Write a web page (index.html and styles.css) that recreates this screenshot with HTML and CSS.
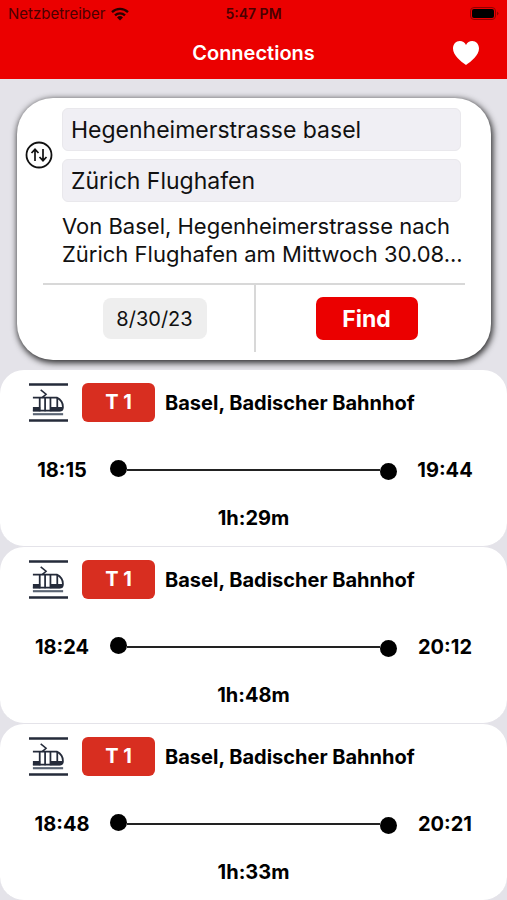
FILE: index.html
```
<!DOCTYPE html>
<html lang="de">
<head>
    <meta charset="utf-8">
    <meta name="viewport" content="width=device-width, initial-scale=1">
    <title>Connections</title>
    <link rel="stylesheet" href="styles.css">
</head>

<body>

    <!-- tram icon, used by every connection -->
    <svg class="sprite" aria-hidden="true">
        <symbol id="tram" viewBox="0 0 40 40">
            <path d="M0 1.500h40M0 38.500h40" stroke="#252b3a" stroke-width="2.400" fill="none"/>
            <path d="M4 32h31" stroke="#5a6473" stroke-width="2.200" fill="none"/>
            <path d="M4 15H28.500C32.500 17 34.800 20.500 34.800 24.500C34.800 27 34 28.300 31.500 28.300H4" stroke="#252b3a" stroke-width="1.800" fill="none"/>
            <path d="M4 24.500h7.500v4.500H4zM22 24.500h13c0 3-1 4.500-3.500 4.500H22z" fill="#252b3a"/>
            <path d="M11 15v14M16.500 15v14M22 15v14M29 15v9.500" stroke="#252b3a" stroke-width="1.800" fill="none"/>
            <path d="M12 7l5.500 4.500-4 3.500" stroke="#252b3a" stroke-width="1.600" fill="none"/>
        </symbol>
    </svg>

    <header class="top">
        <div class="status">
            <span class="carrier">Netzbetreiber
                <svg class="wifi" viewBox="0 0 18 14" aria-hidden="true">
                    <path d="M1 5.200a11.500 11.500 0 0 1 16 0M4 8.400a7.200 7.200 0 0 1 10 0" fill="none" stroke="#2a0000" stroke-width="2.300"/>
                    <path d="M9 13.500L6 10.500a4.300 4.300 0 0 1 6 0z" fill="#2a0000"/>
                </svg>
            </span>
            <span class="clock">5:47 PM</span>
            <svg class="battery" viewBox="0 0 29 13" aria-hidden="true">
                <rect x="0.500" y="0.500" width="25" height="12" rx="3.500" fill="none" stroke="#900000"/>
                <rect x="2" y="2" width="22" height="9" rx="2" fill="#000"/>
                <path d="M27 4.500q3 2 0 4z" fill="#900000"/>
            </svg>
        </div>
        <div class="nav">
            <h1 class="title">Connections</h1>
            <button class="favorite" type="button" aria-label="Favorites">
                <svg viewBox="0 0 26 24" aria-hidden="true">
                    <path d="M13 24C8 20.500 0 14.500 0 7.500C0 3 3 0 6.800 0C9.500 0 11.800 1.500 13 4C14.200 1.500 16.500 0 19.200 0C23 0 26 3 26 7.500C26 14.500 18 20.500 13 24z" fill="#fff"/>
                </svg>
            </button>
        </div>
    </header>

    <main>
        <form class="search">
            <div class="route">
                <button class="swap" type="button" aria-label="Swap stations">
                    <svg viewBox="0 0 28 28" fill="none" stroke="#111" aria-hidden="true">
                        <circle cx="14" cy="14" r="12.500" stroke-width="1.800"/>
                        <path d="M10 20V8.500M6.500 12L10 8.300l3.500 3.700M18 8v11.500M14.500 16l3.500 3.700 3.500-3.700" stroke-width="1.700"/>
                    </svg>
                </button>
                <div class="stations">
                    <input class="station" type="text" aria-label="From" value="Hegenheimerstrasse basel">
                    <input class="station" type="text" aria-label="To" value="Zürich Flughafen">
                </div>
            </div>
            <p class="summary">Von Basel, Hegenheimerstrasse nach Zürich Flughafen am Mittwoch 30.08...</p>
            <div class="actions">
                <div class="action">
                    <input class="date" type="text" aria-label="Date" value="8/30/23">
                </div>
                <div class="action">
                    <button class="find" type="button">Find</button>
                </div>
            </div>
        </form>

        <section class="connection">
            <div class="line">
                <svg class="tram" aria-hidden="true"><use href="#tram"/></svg>
                <span class="badge">T 1</span>
                <h2 class="direction">Basel, Badischer Bahnhof</h2>
            </div>
            <div class="times">
                <time>18:15</time>
                <div class="track"><i class="dot start"></i><i class="rail"></i><i class="dot end"></i></div>
                <time>19:44</time>
            </div>
            <p class="duration">1h:29m</p>
        </section>

        <section class="connection">
            <div class="line">
                <svg class="tram" aria-hidden="true"><use href="#tram"/></svg>
                <span class="badge">T 1</span>
                <h2 class="direction">Basel, Badischer Bahnhof</h2>
            </div>
            <div class="times">
                <time>18:24</time>
                <div class="track"><i class="dot start"></i><i class="rail"></i><i class="dot end"></i></div>
                <time>20:12</time>
            </div>
            <p class="duration">1h:48m</p>
        </section>

        <section class="connection">
            <div class="line">
                <svg class="tram" aria-hidden="true"><use href="#tram"/></svg>
                <span class="badge">T 1</span>
                <h2 class="direction">Basel, Badischer Bahnhof</h2>
            </div>
            <div class="times">
                <time>18:48</time>
                <div class="track"><i class="dot start"></i><i class="rail"></i><i class="dot end"></i></div>
                <time>20:21</time>
            </div>
            <p class="duration">1h:33m</p>
        </section>
    </main>

</body>
</html>
```

FILE: styles.css
```
* {
    box-sizing: border-box;
}

body {
    margin: 0;
    font-family: Inter, sans-serif;
    background-color: #e4e3e9;
    color: #111;
}

h1, h2, p {
    margin: 0;
}

button {
    padding: 0;
    border: none;
    background: none;
    font-family: inherit;
    cursor: pointer;
}

input {
    border: none;
    font-family: inherit;
    color: inherit;
}

svg {
    display: block;
}

.sprite {
    display: none;
}

/* header */

.top {
    background-color: #eb0000;
}

.status {
    display: grid;
    grid-template-columns: 1fr auto 1fr;
    align-items: center;
    height: 27px;
    padding: 0 8px;
    font-size: 14px;
    color: #4a0000;
}

.carrier {
    display: flex;
    align-items: center;
    gap: 6px;
    font-size: 15px;
}

.wifi {
    width: 18px;
    height: 14px;
}

.clock {
    font-weight: 600;
}

.battery {
    width: 29px;
    height: 13px;
    justify-self: end;
}

.nav {
    display: grid;
    grid-template-columns: 1fr auto 1fr;
    align-items: center;
    height: 52px;
    padding: 0 28px;
}

.title {
    grid-column: 2;
    font-size: 20px;
    font-weight: 600;
    color: #fff;
}

.favorite {
    justify-self: end;
    width: 26px;
    height: 24px;
}

/* search card */

.search {
    margin: 19px 16px 10px 17px;
    padding: 10px 26px 8px;
    border-radius: 36px;
    background-color: #fff;
    box-shadow: 1px 2px 6px 1px rgba(0, 0, 0, 0.8);
}

.route {
    display: flex;
    gap: 9px;
    margin-left: -18px;
    padding-right: 4px;
}

.swap {
    width: 28px;
    height: 28px;
    margin-top: 33px;
}

.stations {
    display: flex;
    flex-direction: column;
    flex: 1;
    gap: 8px;
}

.station {
    width: 100%;
    height: 43px;
    padding: 0 8px;
    border: 1px solid #e9e8ec;
    border-radius: 6px;
    background-color: #f0eff4;
    font-size: 23px;
}

.summary {
    margin: 10px 0 15px;
    padding-left: 19px;
    font-size: 22px;
    line-height: 28px;
}

.actions {
    display: grid;
    grid-template-columns: 1fr 1fr;
    border-top: 2px solid #d8d8d8;
}

.action {
    display: flex;
    align-items: center;
    justify-content: center;
    height: 67px;
    padding-left: 12px;
}

.action + .action {
    border-left: 2px solid #d8d8d8;
}

.date {
    width: 104px;
    height: 41px;
    border-radius: 8px;
    background-color: #eee;
    font-size: 20px;
    text-align: center;
}

.find {
    width: 102px;
    height: 43px;
    border-radius: 7px;
    background-color: #eb0000;
    color: #fff;
    font-size: 23px;
    font-weight: 700;
}

/* connections */

.connection {
    padding: 13px 14px 15px;
    border-bottom: 1px solid #e4e3e9;
    border-radius: 24px;
    background-color: #fff;
    font-size: 20px;
    font-weight: 700;
    line-height: 26px;
    color: #000;
}

.line {
    display: flex;
    align-items: center;
    padding-left: 15px;
}

.tram {
    width: 39px;
    height: 39px;
}

.badge {
    width: 73px;
    margin: 0 10px 0 14px;
    border-radius: 6px;
    background-color: #d82e20;
    color: #fff;
    line-height: 39px;
    text-align: center;
}

.direction {
    font-size: 20px;
    font-weight: 700;
}

.times {
    display: grid;
    grid-template-columns: 96px 1fr 96px;
    align-items: center;
    margin: 35px 0 22px;
    text-align: center;
}

.track {
    display: flex;
    align-items: center;
    height: 20px;
}

.dot {
    width: 17px;
    height: 17px;
    border-radius: 50%;
    background-color: #000;
}

.start {
    align-self: flex-start;
}

.end {
    align-self: flex-end;
}

.rail {
    flex: 1;
    height: 2px;
    background-color: #222;
}

.duration {
    text-align: center;
}
```
